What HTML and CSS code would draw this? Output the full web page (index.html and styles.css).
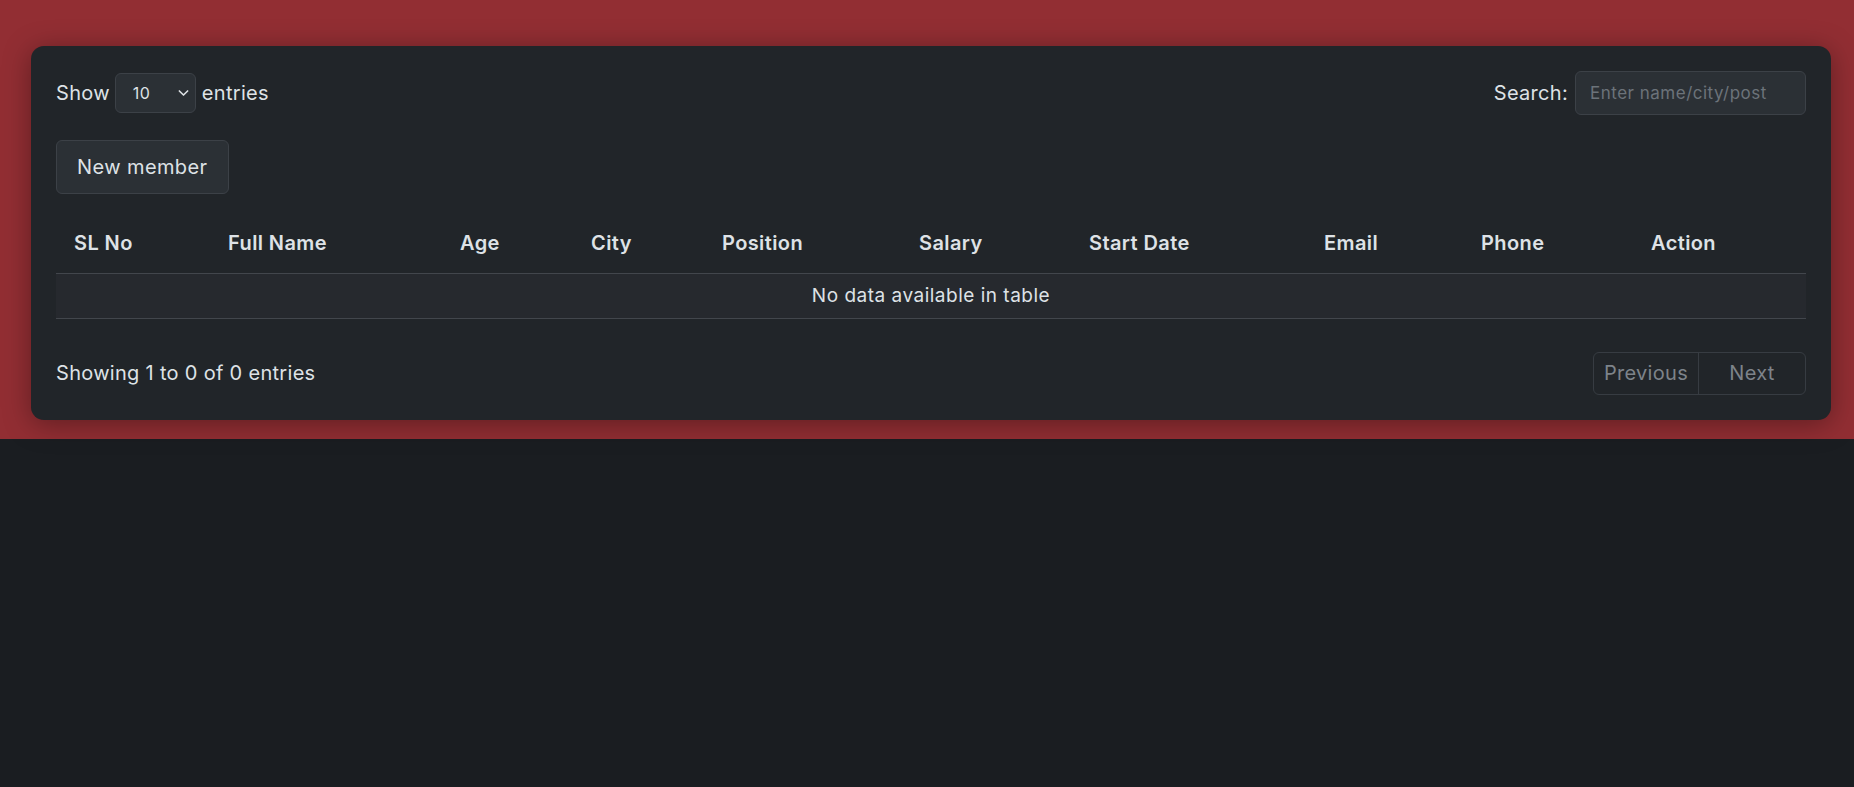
FILE: index.html
```html
<!DOCTYPE html>
<html lang="en">
<head>
<meta charset="utf-8">
<title>Members</title>
<link rel="stylesheet" href="styles.css">
</head>
<body>
<section class="band">
  <div class="card">
    <div class="toolbar">
      <label class="length">Show
        <span class="select">10
          <svg class="chev" viewBox="0 0 12 8" width="11" height="8"><path d="M1.5 1.8 6 6.2l4.5-4.4" fill="none" stroke="#dee2e6" stroke-width="1.8" stroke-linecap="round" stroke-linejoin="round"/></svg>
        </span>
        entries</label>
      <label class="search">Search:
        <span class="input">Enter name/city/post</span>
      </label>
    </div>
    <div class="actions">
      <button class="btn">New member</button>
    </div>
    <table class="grid">
      <colgroup>
        <col style="width:154px"><col style="width:232px"><col style="width:131px"><col style="width:131px"><col style="width:197px"><col style="width:170px"><col style="width:235px"><col style="width:157px"><col style="width:170px"><col style="width:173px">
      </colgroup>
      <thead>
        <tr>
          <th>SL No</th><th>Full Name</th><th>Age</th><th>City</th><th>Position</th><th>Salary</th><th>Start Date</th><th>Email</th><th>Phone</th><th>Action</th>
        </tr>
      </thead>
      <tbody>
        <tr><td colspan="10" class="empty">No data available in table</td></tr>
      </tbody>
    </table>
    <div class="footer">
      <div class="info">Showing 1 to 0 of 0 entries</div>
      <div class="pager">
        <span class="page prev">Previous</span>
        <span class="page next">Next</span>
      </div>
    </div>
  </div>
</section>
</body>
</html>
```
FILE: styles.css
```css
* { box-sizing: border-box; }
html, body { margin: 0; padding: 0; }
body {
  background: #1a1d21;
  color: #dee2e6;
  font-family: "Inter", "Noto Sans", sans-serif;
  min-height: 787px;
}
.band {
  background: #922e33;
  padding: 46px 23px 19px 31px;
}
.card {
  background: #212529;
  border-radius: 13px;
  padding: 25px;
  box-shadow: 0 4px 28px rgba(0,0,0,0.35);
  height: 374px;
}
.toolbar {
  display: flex;
  justify-content: space-between;
  align-items: center;
  height: 44px;
  font-size: 20px;
  letter-spacing: 0.3px;
}
.length, .search {
  display: flex;
  align-items: center;
}
.select {
  display: inline-flex;
  align-items: center;
  justify-content: space-between;
  width: 81px;
  height: 40px;
  margin: 0 6px 0 5px;
  padding: 0 6px 0 17px;
  background: #2b3035;
  border: 1px solid #3c4147;
  border-radius: 6px;
  font-size: 16px;
}
.input {
  display: inline-flex;
  align-items: center;
  width: 231px;
  height: 44px;
  margin-left: 7px;
  padding: 0 14px;
  background: #2b3035;
  border: 1px solid #3c4147;
  border-radius: 6px;
  color: #6c737a;
  font-size: 17px;
  letter-spacing: 0.5px;
}
.actions { margin-top: 25px; }
.btn {
  height: 54px;
  padding: 0 20px;
  background: #2b3035;
  border: 1px solid #3c4147;
  border-radius: 6px;
  color: #dee2e6;
  font-family: inherit;
  font-size: 20px;
  letter-spacing: 0.4px;
}
.grid {
  width: 100%;
  margin-top: 19px;
  border-collapse: collapse;
  table-layout: fixed;
}
.grid th {
  text-align: left;
  font-weight: 600;
  font-size: 20px;
  letter-spacing: 0.4px;
  height: 60px;
  padding: 0 18px;
  border-bottom: 1px solid #42464c;
}
.grid td {
  height: 45px;
  background: #26292e;
  border-bottom: 1px solid #42464c;
  font-size: 19px;
  letter-spacing: 0.5px;
}
.grid td.empty { text-align: center; }
.footer {
  display: flex;
  justify-content: space-between;
  align-items: center;
  margin-top: 33px;
  height: 43px;
}
.info { font-size: 20px; letter-spacing: 0.3px; }
.pager {
  display: flex;
  border: 1px solid #373c42;
  border-radius: 6px;
  height: 43px;
}
.page {
  display: flex;
  align-items: center;
  justify-content: center;
  color: #7d838a;
  font-size: 20px;
  letter-spacing: 0.3px;
}
.prev { width: 105px; border-right: 1px solid #373c42; }
.next { width: 106px; }
```
